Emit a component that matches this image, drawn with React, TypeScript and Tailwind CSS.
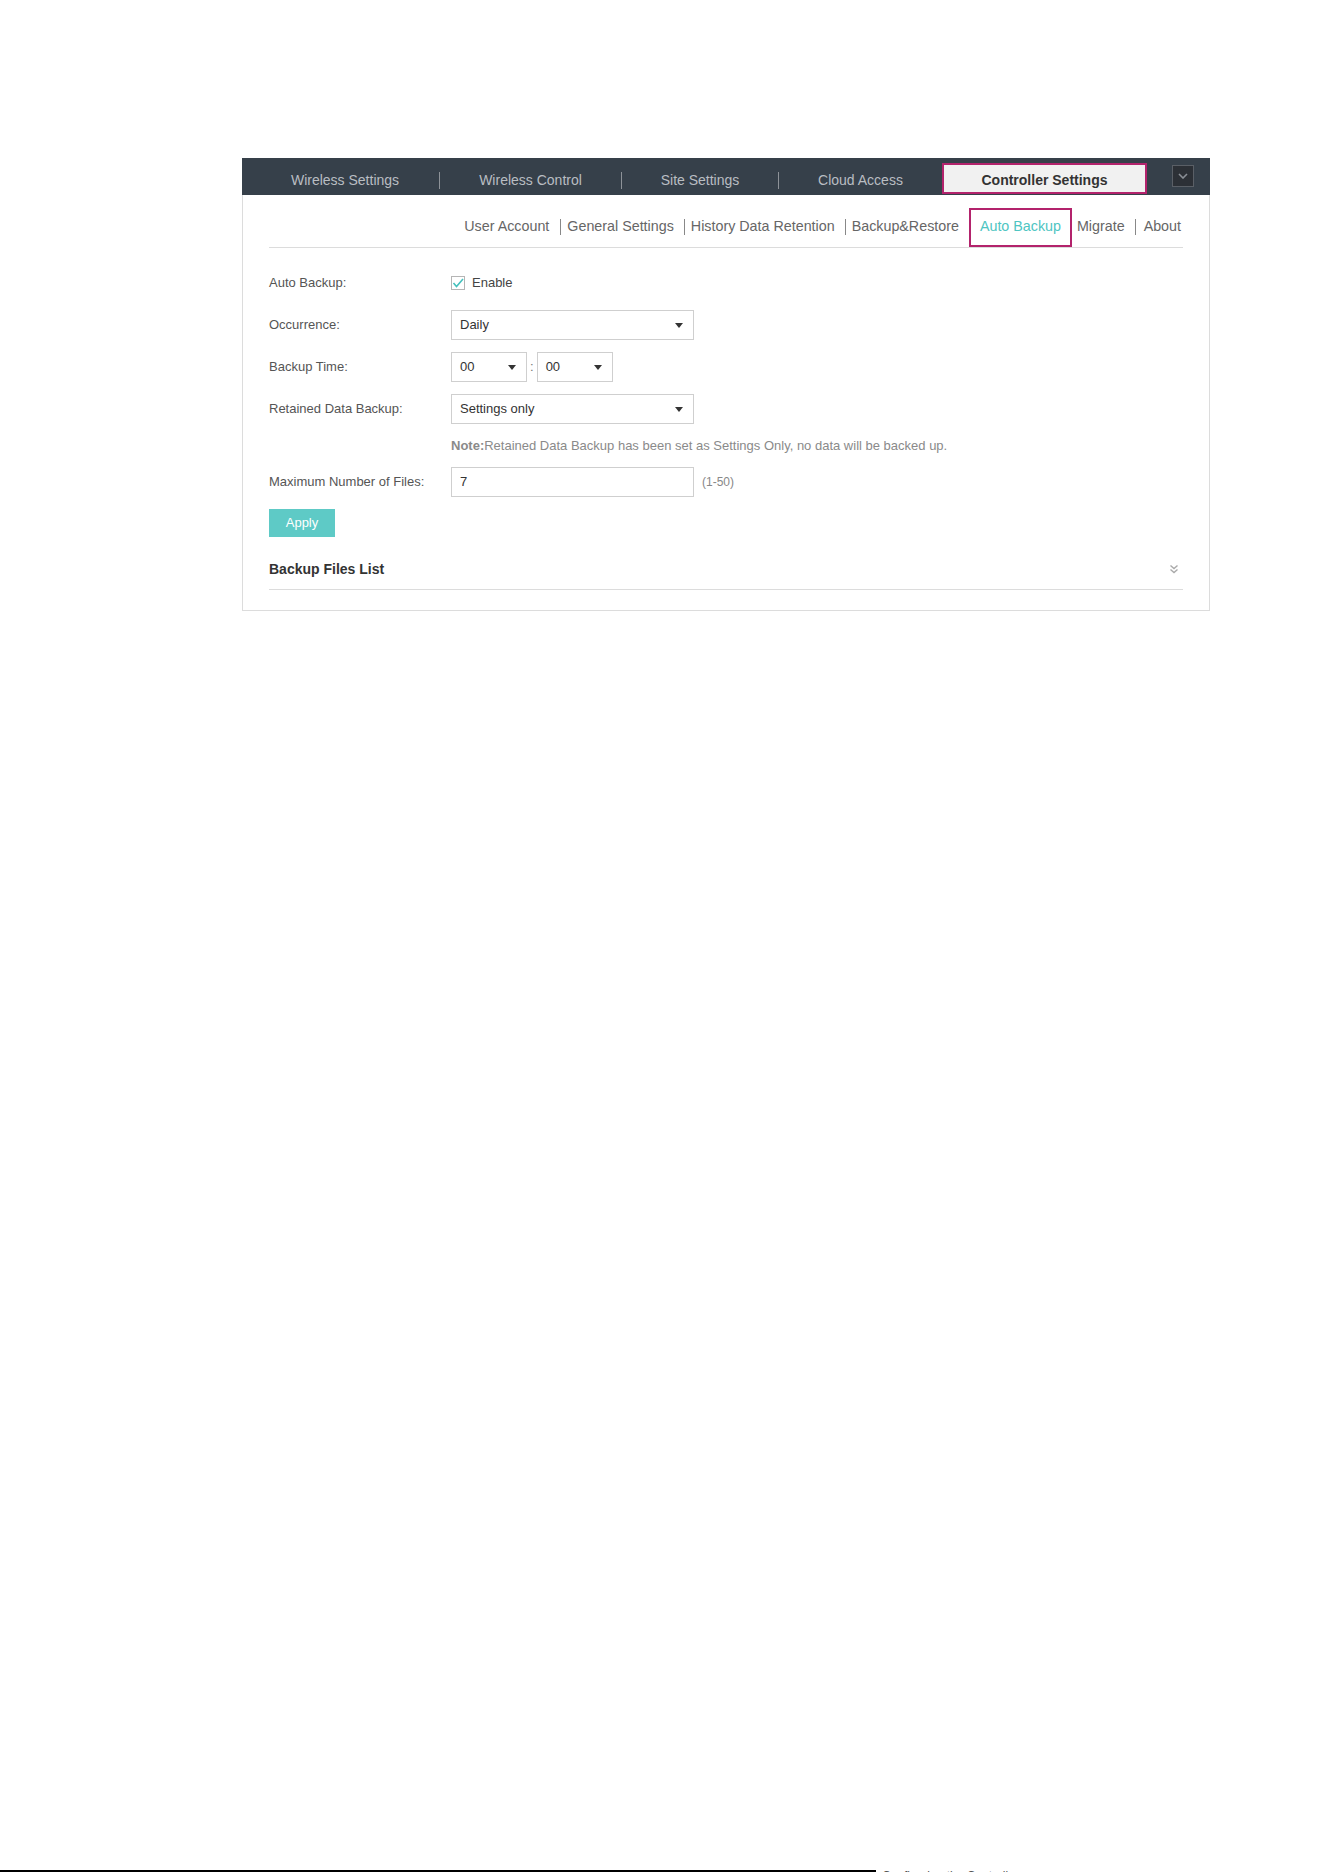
import React from "react";

const Tri = () => (
  <svg width="8" height="5" viewBox="0 0 8 5" className="shrink-0">
    <path d="M0 0 L8 0 L4 5 Z" fill="#333" />
  </svg>
);

function Select({ value, w }: { value: string; w: string }) {
  return (
    <div className={`${w} h-[30px] border border-[#cfcfcf] bg-white flex items-center justify-between pl-[8px] pr-[10px] text-[13px] text-[#333]`}>
      <span>{value}</span>
      <Tri />
    </div>
  );
}

function Row({ label, children, cls }: { label: string; children: React.ReactNode; cls: string }) {
  return (
    <div className={`flex items-center ${cls}`}>
      <div className="w-[182px] shrink-0 text-[13px] text-[#555]">{label}</div>
      {children}
    </div>
  );
}

const Sep = () => <div className="block w-px h-[17px] mt-[9px] bg-[#8d9298] shrink-0" />;
const SubSep = () => <span className="block w-px h-[16px] bg-[#888] shrink-0" />;

export default function App() {
  return (
    <div
      className="h-[1872px] w-[1324px] bg-white relative overflow-hidden flex flex-col"
      style={{ fontFamily: '"Liberation Sans", Arial, sans-serif' }}
    >
      <div className="ml-[242px] mt-[158px] w-[968px]">
        {/* Top nav */}
        <div className="h-[37px] bg-[#36404a] flex items-start pt-[5px] pl-[9px] text-[14px] text-[#b9bdc2]">
          <div className="w-[188px] h-[31px] pt-[4px] flex items-center justify-center">Wireless Settings</div>
          <Sep />
          <div className="w-[181px] h-[31px] pt-[4px] flex items-center justify-center">Wireless Control</div>
          <Sep />
          <div className="w-[156px] h-[31px] pt-[4px] flex items-center justify-center">Site Settings</div>
          <Sep />
          <div className="w-[163px] h-[31px] pt-[4px] flex items-center justify-center">Cloud Access</div>
          <div className="w-[205px] h-[31px] pt-[3px] border-2 border-[#b3236c] bg-[#f1f1f1] flex items-center justify-center font-bold text-[#333]">
            Controller Settings
          </div>
          <div className="ml-[25px] mt-[2px] w-[22px] h-[22px] bg-[#2c3036] border border-[#5a5f66] flex items-center justify-center">
            <svg width="10" height="6" viewBox="0 0 10 6">
              <path d="M1 1 L5 5 L9 1" fill="none" stroke="#8a8f96" strokeWidth="1.6" />
            </svg>
          </div>
        </div>

        {/* Body */}
        <div className="border-x border-b border-[#dcdcdc] px-[26px] pb-[20px]">
          {/* Sub nav */}
          <div className="h-[53px] border-b border-[#dcdcdc] flex items-end justify-end pr-[2px] text-[14.3px] text-[#666]">
            <div className="h-[39px] flex items-center -translate-y-[1px]">
              <span>User Account</span>
              <span className="ml-[11px] mr-[6px] flex"><SubSep /></span>
              <span>General Settings</span>
              <span className="ml-[10px] mr-[6px] flex"><SubSep /></span>
              <span>History Data Retention</span>
              <span className="ml-[10px] mr-[6px] flex"><SubSep /></span>
              <span>Backup&amp;Restore</span>
              <div className="ml-[10px] w-[103px] h-[39px] border-2 border-[#b3236c] flex items-center justify-center text-[#4ec5c2] translate-y-[1px]">
                <span className="-translate-y-[1px]">Auto Backup</span>
              </div>
              <span className="ml-[5px]">Migrate</span>
              <span className="ml-[10px] mr-[8px] flex"><SubSep /></span>
              <span>About</span>
            </div>
          </div>

          {/* Form */}
          <div className="pt-[25px]">
            <Row label="Auto Backup:" cls="h-[20px]">
              <div className="flex items-center">
                <div className="w-[14px] h-[14px] border border-[#b5b5b5] bg-white flex items-center justify-center">
                  <svg width="12" height="10" viewBox="0 0 12 10">
                    <path d="M1.5 5 L4.5 8.5 L11 1" fill="none" stroke="#45c1bd" strokeWidth="1.6" />
                  </svg>
                </div>
                <span className="ml-[7px] text-[13px] text-[#444]">Enable</span>
              </div>
            </Row>
            <Row label="Occurrence:" cls="mt-[17px] h-[30px]">
              <Select value="Daily" w="w-[243px]" />
            </Row>
            <Row label="Backup Time:" cls="mt-[12px] h-[30px]">
              <div className="flex items-center">
                <Select value="00" w="w-[76px]" />
                <span className="mx-[3px] text-[13px] text-[#777]">:</span>
                <Select value="00" w="w-[76px]" />
              </div>
            </Row>
            <Row label="Retained Data Backup:" cls="mt-[12px] h-[30px]">
              <Select value="Settings only" w="w-[243px]" />
            </Row>
            <div className="mt-[13px] h-[18px] pl-[182px] flex items-center text-[13px] text-[#8a8a8a]">
              <span className="font-bold">Note:</span>
              <span>Retained Data Backup has been set as Settings Only, no data will be backed up.</span>
            </div>
            <Row label="Maximum Number of Files:" cls="mt-[12px] h-[30px]">
              <div className="flex items-center">
                <div className="w-[243px] h-[30px] border border-[#cfcfcf] flex items-center pl-[8px] text-[13px] text-[#333]">7</div>
                <span className="ml-[8px] text-[12px] text-[#888]">(1-50)</span>
              </div>
            </Row>
            <div className="mt-[12px] w-[66px] h-[28px] bg-[#5ecac6] flex items-center justify-center text-[13px] text-white">
              Apply
            </div>
            <div className="mt-[15px] h-[38px] pb-[3px] border-b border-[#dcdcdc] flex items-center justify-between">
              <span className="text-[14px] font-bold text-[#333]">Backup Files List</span>
              <svg width="10" height="10" viewBox="0 0 10 10" className="mr-[4px]">
                <path d="M1.5 1.5 L5 4.5 L8.5 1.5 M1.5 5.5 L5 8.5 L8.5 5.5" fill="none" stroke="#aaa" strokeWidth="1.4" />
              </svg>
            </div>
          </div>
        </div>
      </div>

      {/* Page footer remnant */}
      <div className="mt-auto h-[2px] flex items-start overflow-visible">
        <div className="w-[876px] h-[2px] bg-black" />
        <span className="ml-[6px] text-[12px] leading-[12px] text-[#555] whitespace-nowrap">
          Configuring the Controller
        </span>
      </div>
    </div>
  );
}
